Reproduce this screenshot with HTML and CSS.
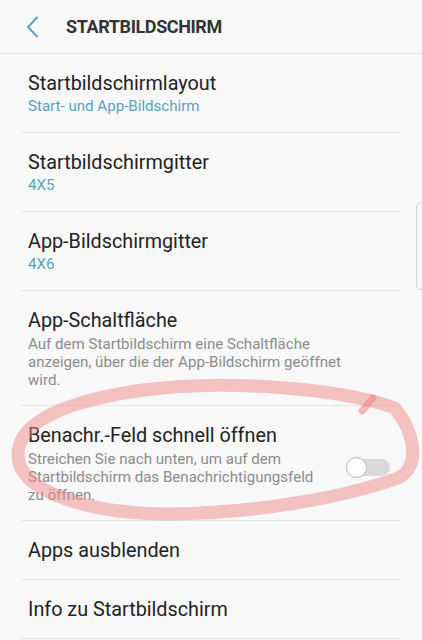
FILE: index.html
```html
<!DOCTYPE html>
<html lang="de">
<head>
<meta charset="utf-8">
<title>Startbildschirm</title>
<link rel="stylesheet" href="styles.css">
</head>
<body>
<div class="screen">
  <header class="appbar">
    <svg class="back" width="14" height="22" viewBox="0 0 14 22"><polyline points="11,1.5 2,11 11,20.5" fill="none" stroke="#5aa3c6" stroke-width="2" stroke-linecap="round" stroke-linejoin="round"/></svg>
    <h1 class="title">STARTBILDSCHIRM</h1>
  </header>
  <ul class="list">
    <li class="item">
      <div class="item-title">Startbildschirmlayout</div>
      <div class="item-value">Start- und App-Bildschirm</div>
    </li>
    <li class="item">
      <div class="item-title">Startbildschirmgitter</div>
      <div class="item-value">4X5</div>
    </li>
    <li class="item">
      <div class="item-title">App-Bildschirmgitter</div>
      <div class="item-value">4X6</div>
    </li>
    <li class="item">
      <div class="item-title">App-Schaltfläche</div>
      <div class="item-desc">Auf dem Startbildschirm eine Schaltfläche<br>anzeigen, über die der App-Bildschirm geöffnet<br>wird.</div>
    </li>
    <li class="item item-switch">
      <div class="item-text">
        <div class="item-title">Benachr.-Feld schnell öffnen</div>
        <div class="item-desc">Streichen Sie nach unten, um auf dem<br>Startbildschirm das Benachrichtigungsfeld<br>zu öffnen.</div>
      </div>
      <div class="toggle"><span class="knob"></span></div>
    </li>
    <li class="item">
      <div class="item-title">Apps ausblenden</div>
    </li>
    <li class="item">
      <div class="item-title">Info zu Startbildschirm</div>
    </li>
  </ul>
  <div class="scrollbar"></div>
  <svg class="scribble" width="422" height="640" viewBox="0 0 422 640">
    <path d="M395 408 C 340 388, 220 378, 130 392 C 70 402, 18 420, 18 455 C 18 492, 90 514, 170 514 C 260 513, 345 497, 398 478 C 420 468, 416 435, 395 408" fill="none" stroke="#f08a8a" stroke-opacity="0.5" stroke-width="13" stroke-linecap="round"/>
    <path d="M362 411 L 373 398" fill="none" stroke="#f08080" stroke-opacity="0.55" stroke-width="7" stroke-linecap="round"/>
  </svg>
</div>
</body>
</html>
```
FILE: styles.css
```css
* { box-sizing: border-box; }
html, body { margin: 0; padding: 0; }
body {
  background: #f8f8f8;
  font-family: Roboto, "Noto Sans", "Liberation Sans", sans-serif;
  color: #222;
}
.screen {
  position: relative;
  width: 422px;
  height: 640px;
  overflow: hidden;
}
.appbar {
  height: 54px;
  display: flex;
  align-items: center;
  border-bottom: 1px solid #e6e6e6;
  padding-left: 26px;
}
.back { display: block; flex: none; }
.title {
  margin: 0 0 0 26px;
  font-size: 18px;
  font-weight: 700;
  letter-spacing: -0.4px;
  color: #333;
}
.list {
  list-style: none;
  margin: 0 22px 0 21px;
  padding: 0;
}
.item {
  padding: 18px 0 16px 7px;
  border-bottom: 1px solid #e6e6e6;
}
.item-title {
  font-size: 19.8px;
  line-height: 24px;
  color: #232323;
}
.item-value {
  font-size: 15.1px;
  line-height: 20px;
  color: #56a2c4;
}
.item-desc {
  margin-top: 2px;
  font-size: 15.1px;
  line-height: 18px;
  color: #8c8c8c;
}
.item-switch {
  display: flex;
  align-items: center;
  justify-content: space-between;
}
.toggle {
  position: relative;
  width: 43px;
  height: 17px;
  margin-right: 10px;
  margin-top: 6px;
  border-radius: 9px;
  background: #dadada;
}
.knob {
  position: absolute;
  left: -1px;
  top: -2px;
  width: 21px;
  height: 21px;
  border-radius: 50%;
  background: #fff;
  border: 1.5px solid #b8b8b8;
}
.scrollbar {
  position: absolute;
  left: 416px;
  top: 202px;
  width: 10px;
  height: 88px;
  border: 1px solid #d2d2d2;
  border-radius: 5px;
}
.scribble {
  position: absolute;
  left: 0;
  top: 0;
  pointer-events: none;
}
```
